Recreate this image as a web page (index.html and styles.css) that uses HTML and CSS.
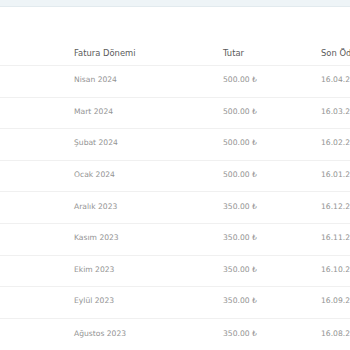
FILE: index.html
```html
<!DOCTYPE html>
<html lang="tr">
<head>
<meta charset="utf-8">
<link rel="stylesheet" href="styles.css">
</head>
<body>
<div class="topbar"></div>
<div class="table">
  <div class="row head"><span>Fatura Dönemi</span><span>Tutar</span><span>Son Ödeme Tarihi</span></div>
  <div class="row"><span>Nisan 2024</span><span>500.00 ₺</span><span>16.04.2024</span></div>
  <div class="row"><span>Mart 2024</span><span>500.00 ₺</span><span>16.03.2024</span></div>
  <div class="row"><span>Şubat 2024</span><span>500.00 ₺</span><span>16.02.2024</span></div>
  <div class="row"><span>Ocak 2024</span><span>500.00 ₺</span><span>16.01.2024</span></div>
  <div class="row"><span>Aralık 2023</span><span>350.00 ₺</span><span>16.12.2023</span></div>
  <div class="row"><span>Kasım 2023</span><span>350.00 ₺</span><span>16.11.2023</span></div>
  <div class="row"><span>Ekim 2023</span><span>350.00 ₺</span><span>16.10.2023</span></div>
  <div class="row"><span>Eylül 2023</span><span>350.00 ₺</span><span>16.09.2023</span></div>
  <div class="row"><span>Ağustos 2023</span><span>350.00 ₺</span><span>16.08.2023</span></div>
</div>
</body>
</html>
```
FILE: styles.css
```css
html, body {
  margin: 0;
  padding: 0;
  background: #ffffff;
  overflow: hidden;
  width: 350px;
  height: 350px;
}
body {
  font-family: "DejaVu Sans", "Open Sans", sans-serif;
}
.topbar {
  height: 6px;
  background: #eef4f7;
  border-bottom: 1px solid #e2eaee;
}
.table {
  padding-top: 27px;
  width: 440px;
}
.row {
  display: grid;
  grid-template-columns: 149px 98px 1fr;
  padding-left: 74px;
  height: 31.6px;
  box-sizing: border-box;
  align-items: center;
  border-bottom: 1px solid #f0f0f0;
  font-size: 7.6px;
  color: #939393;
  white-space: nowrap;
}
.row span {
  padding-bottom: 3px;
}
.row.head {
  font-size: 8.4px;
  color: #5a5a5a;
  height: 32px;
}
.row.head span {
  padding-bottom: 0;
  padding-top: 6px;
}
.row:last-child {
  border-bottom: none;
}
```
